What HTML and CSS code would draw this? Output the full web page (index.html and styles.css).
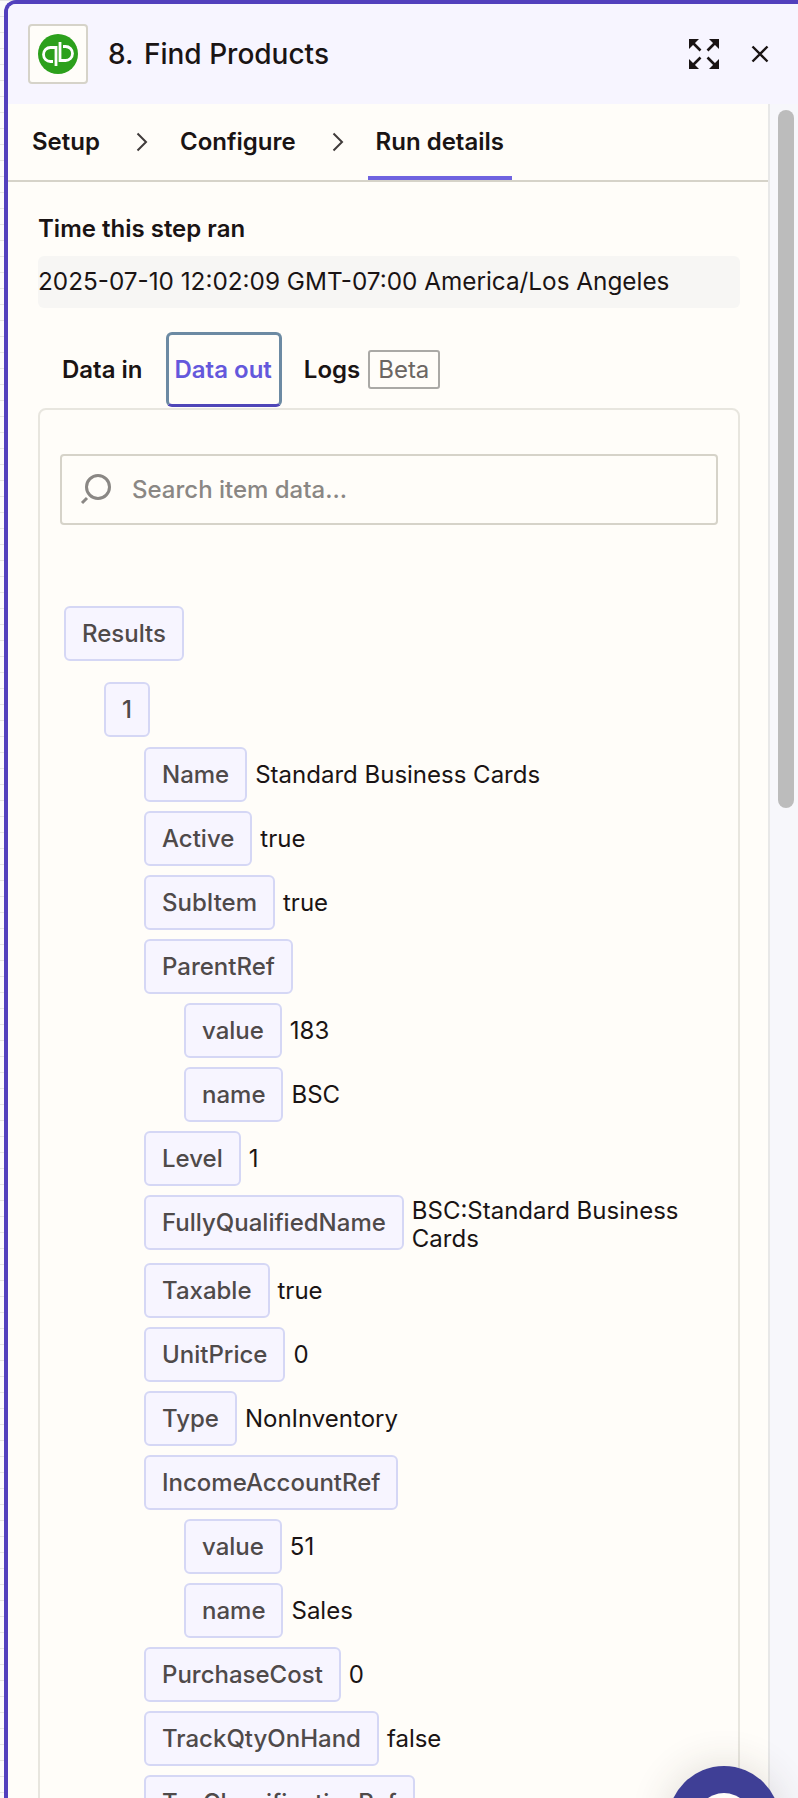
FILE: index.html
```html
<!DOCTYPE html>
<html lang="en">
<head>
<meta charset="utf-8">
<title>Find Products</title>
<link rel="stylesheet" href="styles.css">
</head>
<body>
<div class="frame">
  <header class="head">
    <div class="logo-box">
      <svg class="logo" viewBox="0 0 40 40" aria-hidden="true">
        <circle cx="20" cy="20" r="20" fill="#2ca01c"/>
        <path d="M18 32V13.500H12.500a7 7 0 0 0 0 14H15" fill="none" stroke="#fff" stroke-width="2.800"/>
        <path d="M22 8V26.500H27.500a7 7 0 0 0 0-14H25" fill="none" stroke="#fff" stroke-width="2.800"/>
      </svg>
    </div>
    <h1 class="title"><span class="num">8.</span> Find Products</h1>
    <svg class="expand" viewBox="0 0 30 30" aria-hidden="true">
      <g fill="#1a1414" stroke="#1a1414" stroke-width="2.600">
        <path d="M0 0h10L6.500 3.500 3.500 6.500 0 10z" stroke="none"/>
        <path d="M30 0H20l3.500 3.500 3 3L30 10z" stroke="none"/>
        <path d="M0 30h10l-3.500-3.500-3-3L0 20z" stroke="none"/>
        <path d="M30 30H20l3.500-3.500 3-3L30 20z" stroke="none"/>
        <path d="M3 3l8.500 8.500M27 3l-8.500 8.500M3 27l8.500-8.500M27 27l-8.500-8.500" fill="none"/>
      </g>
    </svg>
    <svg class="close" viewBox="0 0 20 20" aria-hidden="true">
      <path d="M2.500 2.500l15 15M17.500 2.500l-15 15" fill="none" stroke="#1a1414" stroke-width="2.400"/>
    </svg>
  </header>
  <div class="body">
    <main class="content">
      <nav class="steps">
        <span class="step">Setup</span>
        <svg class="chev" viewBox="0 0 12 20" aria-hidden="true"><path d="M1.500 1.500L10 10l-8.500 8.500" fill="none" stroke="#403b3b" stroke-width="2"/></svg>
        <span class="step">Configure</span>
        <svg class="chev" viewBox="0 0 12 20" aria-hidden="true"><path d="M1.500 1.500L10 10l-8.500 8.500" fill="none" stroke="#403b3b" stroke-width="2"/></svg>
        <span class="step step-on">Run details</span>
      </nav>
      <section class="pane">
        <h2 class="label">Time this step ran</h2>
        <div class="time">2025-07-10 12:02:09 GMT-07:00 America/Los Angeles</div>
        <div class="tabs">
          <span class="tab">Data in</span>
          <span class="tab tab-on">Data out</span>
          <span class="tab">Logs <span class="beta">Beta</span></span>
        </div>
        <div class="panel">
          <div class="search">
            <svg class="mag" viewBox="0 0 32 32" aria-hidden="true">
              <circle cx="19" cy="13" r="11.500" fill="none" stroke="#8a8784" stroke-width="3"/>
              <path d="M8 24l-5 5" fill="none" stroke="#8a8784" stroke-width="3"/>
            </svg>
            <span class="placeholder">Search item data...</span>
          </div>
          <div class="tree">
            <div class="row row-top"><span class="tag">Results</span></div>
            <div class="nest">
              <div class="row row-one"><span class="tag">1</span></div>
              <div class="nest">
                <div class="row"><span class="tag">Name</span><span class="val">Standard Business Cards</span></div>
                <div class="row"><span class="tag">Active</span><span class="val">true</span></div>
                <div class="row"><span class="tag">SubItem</span><span class="val">true</span></div>
                <div class="row"><span class="tag">ParentRef</span></div>
                <div class="nest">
                  <div class="row"><span class="tag">value</span><span class="val">183</span></div>
                  <div class="row"><span class="tag">name</span><span class="val">BSC</span></div>
                </div>
                <div class="row"><span class="tag">Level</span><span class="val">1</span></div>
                <div class="row"><span class="tag">FullyQualifiedName</span><span class="val">BSC:Standard Business Cards</span></div>
                <div class="row"><span class="tag">Taxable</span><span class="val">true</span></div>
                <div class="row"><span class="tag">UnitPrice</span><span class="val">0</span></div>
                <div class="row"><span class="tag">Type</span><span class="val">NonInventory</span></div>
                <div class="row"><span class="tag">IncomeAccountRef</span></div>
                <div class="nest">
                  <div class="row"><span class="tag">value</span><span class="val">51</span></div>
                  <div class="row"><span class="tag">name</span><span class="val">Sales</span></div>
                </div>
                <div class="row"><span class="tag">PurchaseCost</span><span class="val">0</span></div>
                <div class="row"><span class="tag">TrackQtyOnHand</span><span class="val">false</span></div>
                <div class="row"><span class="tag">TaxClassificationRef</span></div>
              </div>
            </div>
          </div>
        </div>
      </section>
    </main>
    <aside class="track"><div class="thumb"></div></aside>
  </div>
  <div class="chat"><div class="chat-in"></div></div>
</div>
</body>
</html>
```
FILE: styles.css
```css
* { box-sizing: border-box; }
html, body { margin: 0; height: 1798px; overflow: hidden; }
body {
  background: #fffdf9;
  font-family: Inter, "Liberation Sans", sans-serif;
  color: #1a1414;
  background-image: repeating-linear-gradient(180deg, #e4e4e4 0 1px, #fbfbfb 1px 16px);
}
.frame {
  position: relative;
  height: 1798px;
  margin-left: 4px;
  border: 4px solid #5240bd;
  border-width: 4px 0 0 4px;
  border-top-left-radius: 12px;
  overflow: hidden;
  background: #fffdf9;
}
.head {
  display: flex;
  align-items: center;
  height: 100px;
  padding: 0 28px 0 20px;
  background: #f7f5ff;
}
.logo-box {
  display: flex;
  align-items: center;
  justify-content: center;
  width: 60px;
  height: 60px;
  border: 2px solid #d6d3c9;
  border-radius: 4px;
  background: #fffdf9;
}
.logo { width: 40px; height: 40px; }
.title {
  flex: 1;
  margin: 0 0 0 20px;
  font-size: 28px;
  font-weight: 500;
  line-height: 34px;
}
.num { margin-right: 3px; }
.expand { width: 30px; height: 30px; margin-right: 31px; }
.close { width: 20px; height: 20px; }
.body { display: flex; height: 1694px; }
.content { width: 762px; border-right: 2px solid #e8e8e8; }
.track { flex: 1; padding: 6px 4px 0 8px; background: #f7f7fb; }
.thumb { height: 698px; border-radius: 8px; background: #bcbcbc; }
.steps {
  display: flex;
  align-items: center;
  height: 78px;
  padding-left: 24px;
  border-bottom: 2px solid #d6d3c9;
  font-size: 24px;
  font-weight: 600;
}
.step { display: flex; align-items: center; height: 76px; padding-bottom: 2px; }
.chev { width: 12px; height: 20px; margin: 0 32px 0 36px; }
.step-on {
  position: relative;
  margin-left: -8px;
  padding: 0 8px 2px;
}
.step-on::after {
  content: "";
  position: absolute;
  left: 0;
  right: 0;
  bottom: 0;
  height: 4px;
  background: #6f63e0;
}
.pane { padding: 33px 28px 0 30px; }
.label { margin: 0 0 13px 0; font-size: 24px; font-weight: 600; line-height: 28px; }
.time {
  display: flex;
  align-items: center;
  height: 52px;
  padding-bottom: 2px;
  border-radius: 6px;
  background: #f7f6f4;
  font-size: 24.300px;
  white-space: nowrap;
}
.tabs {
  display: flex;
  align-items: flex-start;
  height: 75px;
  margin-top: 24px;
  padding-left: 24px;
  font-size: 24px;
  font-weight: 600;
}
.tab { display: flex; align-items: center; gap: 8px; height: 75px; white-space: nowrap; }
.tab-on {
  margin: 0 22px 0 23px;
  padding: 0 7px 0 6px;
  border: 3px solid #6c8aa3;
  border-bottom-color: #4f46b8;
  border-radius: 6px;
  color: #6458dc;
}
.beta {
  padding: 0 9px 0 8px;
  height: 39px;
  line-height: 35px;
  border: 2px solid #aaa9a6;
  border-radius: 3px;
  font-weight: 400;
  color: #6b6663;
}
.panel {
  margin-top: 1px;
  height: 1600px;
  padding: 44px 20px 0 20px;
  border: 2px solid #e8e6df;
  border-radius: 8px;
}
.search {
  display: flex;
  align-items: center;
  height: 71px;
  padding-left: 17px;
  border: 2px solid #d6d3c9;
  border-radius: 4px;
  font-size: 24px;
  font-weight: 500;
  color: #8a8784;
}
.mag { width: 32px; height: 32px; margin-right: 21px; }
.tree { padding: 81px 0 0 4px; font-size: 24px; }
.nest { padding-left: 40px; }
.row { display: flex; align-items: flex-start; gap: 8px; margin-bottom: 9px; }
.row-top { margin-bottom: 21px; }
.row-one { margin-bottom: 10px; }
.tag {
  flex: none;
  height: 55px;
  padding: 0 16px;
  line-height: 51px;
  border: 2px solid #d5d7f5;
  border-radius: 6px;
  background: #f7f5ff;
  font-weight: 500;
  color: #4f4a4a;
}
.val { align-self: center; padding: 1.500px 0; line-height: 28px; }
.chat {
  position: absolute;
  left: 660px;
  top: 1762px;
  display: flex;
  justify-content: center;
  width: 112px;
  height: 112px;
  padding-top: 27px;
  border-radius: 50%;
  background: #3f3f96;
  box-shadow: 0 0 40px rgba(60, 50, 40, 0.16);
}
.chat-in { width: 56px; height: 56px; border-radius: 50%; background: #fffdf9; }
```
